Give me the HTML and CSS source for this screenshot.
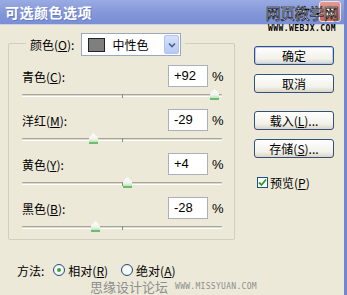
FILE: index.html
```html
<!DOCTYPE html>
<html lang="zh-CN">
<head>
    <meta charset="UTF-8">
    <title>可选颜色选项</title>
    <link rel="stylesheet" href="styles.css">
</head>
<body>
    <div class="window">
        <div class="titlebar">
            <span class="title">可选颜色选项</span>
            <span class="close">
                <svg width="10" height="10" viewBox="0 0 10 10"><path d="M1 1 L9 9 M9 1 L1 9" stroke="#ffffff" stroke-width="2"/></svg>
            </span>
        </div>
        <div class="mark-top">
            <span class="mark-cn">网页教学网</span>
            <span class="mark-en">WWW.WEBJX.COM</span>
        </div>

        <div class="content">
            <div class="main">
                <div class="group">
                    <div class="legend">
                        <span>颜色(<u>O</u>):</span>
                        <div class="select">
                            <span class="swatch"></span>
                            <span class="select-text">中性色</span>
                            <span class="select-btn">
                                <svg width="8" height="6" viewBox="0 0 8 6"><path d="M1 1.5 L4 4.5 L7 1.5" fill="none" stroke="#4d6185" stroke-width="1.6"/></svg>
                            </span>
                        </div>
                    </div>

                    <div class="row first">
                        <span class="label">青色(<u>C</u>):</span>
                        <span class="num">+92</span>
                        <span class="pct">%</span>
                    </div>
                    <div class="track"><span class="line"></span><span class="tick"></span><span class="thumb" style="left: 96%"></span></div>

                    <div class="row">
                        <span class="label">洋红(<u>M</u>):</span>
                        <span class="num">-29</span>
                        <span class="pct">%</span>
                    </div>
                    <div class="track"><span class="line"></span><span class="tick"></span><span class="thumb" style="left: 35.5%"></span></div>

                    <div class="row">
                        <span class="label">黄色(<u>Y</u>):</span>
                        <span class="num">+4</span>
                        <span class="pct">%</span>
                    </div>
                    <div class="track"><span class="line"></span><span class="tick"></span><span class="thumb" style="left: 52.5%"></span></div>

                    <div class="row">
                        <span class="label">黑色(<u>B</u>):</span>
                        <span class="num">-28</span>
                        <span class="pct">%</span>
                    </div>
                    <div class="track"><span class="line"></span><span class="tick"></span><span class="thumb" style="left: 36.5%"></span></div>
                </div>

                <div class="method">
                    <span>方法:</span>
                    <span class="radio on"></span><span>相对(<u>R</u>)</span>
                    <span class="radio second"></span><span>绝对(<u>A</u>)</span>
                </div>
            </div>

            <div class="side">
                <button class="btn default">确定</button>
                <button class="btn">取消</button>
                <button class="btn gap">载入(<u>L</u>)...</button>
                <button class="btn">存储(<u>S</u>)...</button>
                <div class="check">
                    <span class="box">
                        <svg width="9" height="9" viewBox="0 0 9 9"><path d="M1 4.5 L3.5 7 L8 1.5" fill="none" stroke="#21a121" stroke-width="1.8"/></svg>
                    </span>
                    <span>预览(<u>P</u>)</span>
                </div>
            </div>
        </div>

        <div class="mark-bottom">
            <span class="mb-cn">思缘设计论坛</span>
            <span class="mb-en">WWW.MISSYUAN.COM</span>
        </div>
    </div>
</body>
</html>
```

FILE: styles.css
```css
body {
    margin: 0;
    background-color: #ece9d8;
    font-family: "Noto Sans CJK SC", "Liberation Sans", sans-serif;
    font-size: 12px;
    color: #000000;
}
u {
    text-decoration: underline;
    text-underline-offset: 1px;
}
.window {
    position: relative;
    width: 347px;
    height: 295px;
    box-sizing: border-box;
    border-right: 3px solid #7487cc;
    background-color: #ece9d8;
    overflow: hidden;
}
.titlebar {
    height: 25px;
    display: flex;
    align-items: center;
    justify-content: space-between;
    padding: 0 3px 0 5px;
    background: linear-gradient(#9aabe3, #8195d8 60%, #7a8ed4);
    border-bottom: 1px solid #c8cfe8;
    box-sizing: border-box;
}
.title {
    color: #ffffff;
    font-size: 14px;
    font-weight: bold;
    letter-spacing: 0.5px;
    text-shadow: 1px 1px 0 #6a7cc0;
}
.close {
    width: 20px;
    height: 19px;
    margin-top: -2px;
    border: 1px solid #f0e0e0;
    border-radius: 3px;
    background: linear-gradient(#e39b93, #c9645c);
    display: flex;
    align-items: center;
    justify-content: center;
}

/* watermark on the title bar */
.mark-top {
    position: absolute;
    left: 264px;
    top: 4px;
    width: 76px;
    display: flex;
    flex-direction: column;
    align-items: center;
}
.mark-cn {
    color: #ffffff;
    font-size: 15px;
    line-height: 18px;
    -webkit-text-stroke: 0.6px #000000;
    letter-spacing: -0.5px;
}
.mark-en {
    margin-top: 3px;
    font-family: "DejaVu Sans Mono", monospace;
    font-size: 8px;
    font-weight: bold;
    line-height: 8px;
    letter-spacing: 0.4px;
    color: #000000;
}

.content {
    display: flex;
    padding-left: 8px;
}
.main {
    width: 227px;
}
.group {
    margin-top: 18px;
    height: 197px;
    box-sizing: border-box;
    border: 1px solid #d0cebf;
    border-radius: 2px;
}
.legend {
    display: flex;
    align-items: center;
    gap: 7px;
    width: fit-content;
    margin: -11px 0 0 17px;
    padding: 0 4px;
    background-color: #ece9d8;
    height: 23px;
}
.select {
    display: flex;
    align-items: center;
    width: 100px;
    height: 23px;
    box-sizing: border-box;
    border: 1px solid #9aa9bf;
    background-color: #ffffff;
    padding: 0 1px 0 6px;
}
.swatch {
    width: 15px;
    height: 12px;
    background-color: #7f7f7f;
    border: 1px solid #222222;
}
.select-text {
    flex: 1;
    margin-left: 7px;
}
.select-btn {
    width: 15px;
    height: 19px;
    display: flex;
    align-items: center;
    justify-content: center;
    border-radius: 2px;
    background: linear-gradient(#d7e2fb, #b6c9f5);
    border: 1px solid #b2c3ee;
    box-sizing: border-box;
}

.row {
    display: flex;
    align-items: center;
    height: 22px;
    padding: 0 11px 0 13px;
}
.row.first {
    margin-top: 9px;
}
.label {
    flex: 1;
}
.num {
    width: 40px;
    height: 22px;
    box-sizing: border-box;
    border: 1px solid #a8b1bd;
    background-color: #ffffff;
    padding-left: 5px;
    font-family: "Liberation Sans", sans-serif;
    font-size: 13px;
    line-height: 20px;
}
.pct {
    width: 11px;
    margin-left: 4px;
    font-family: "Liberation Sans", sans-serif;
    font-size: 13px;
}
.track {
    position: relative;
    height: 22px;
    margin: 0 12px 0 13px;
}
.line {
    position: absolute;
    left: 0;
    right: 0;
    top: 7px;
    height: 1px;
    border-top: 1px solid #a7a599;
    border-bottom: 1px solid #ffffff;
    background-color: #dedbcd;
    border-radius: 1px;
}
.tick {
    position: absolute;
    left: 50%;
    top: 7px;
    width: 1px;
    height: 4px;
    background-color: #8e8c82;
}
.thumb {
    position: absolute;
    top: 2px;
    width: 9px;
    height: 11px;
    margin-left: -4px;
    background: linear-gradient(#ffffff, #eef4ec 55%, #9fd49c);
    box-sizing: border-box;
    clip-path: polygon(50% 0, 100% 40%, 100% 100%, 0 100%, 0 40%);
    box-shadow: inset 0 -2px 0 #6cbf69;
}

.method {
    display: flex;
    align-items: center;
    margin-top: 22px;
    padding-left: 9px;
    height: 16px;
}
.radio {
    width: 12px;
    height: 12px;
    box-sizing: border-box;
    border: 1px solid #1d5281;
    border-radius: 50%;
    background: radial-gradient(#ffffff 40%, #dcdcd4);
    margin: 0 3px 0 9px;
    position: relative;
}
.radio.on::after {
    content: "";
    position: absolute;
    left: 3px;
    top: 3px;
    width: 4px;
    height: 4px;
    border-radius: 50%;
    background-color: #3ba43a;
}
.radio.second {
    margin-left: 13px;
}

.side {
    display: flex;
    flex-direction: column;
    margin: 21px 0 0 19px;
}
.btn {
    width: 80px;
    height: 19px;
    margin-bottom: 9px;
    padding: 0;
    border: 1px solid #35507a;
    border-radius: 3px;
    background: linear-gradient(#ffffff, #f2f1ea 70%, #d9d6c8);
    font-family: "Noto Sans CJK SC", "Liberation Sans", sans-serif;
    font-size: 12px;
    line-height: 17px;
    color: #000000;
}
.btn.default {
    box-shadow: inset 0 0 0 1px #b8cdf3;
}
.btn.gap {
    margin-top: 9px;
}
.check {
    display: flex;
    align-items: center;
    margin: 7px 0 0 3px;
    gap: 2px;
}
.box {
    width: 11px;
    height: 11px;
    box-sizing: border-box;
    border: 1px solid #1c5180;
    background-color: #ffffff;
    display: flex;
    align-items: center;
    justify-content: center;
}

.mark-bottom {
    position: absolute;
    left: 90px;
    top: 277px;
    display: flex;
    align-items: center;
    gap: 7px;
    color: #8f8f8f;
}
.mb-cn {
    font-size: 13px;
}
.mb-en {
    font-family: "DejaVu Sans Mono", monospace;
    font-size: 8px;
    letter-spacing: 0.3px;
}
```
